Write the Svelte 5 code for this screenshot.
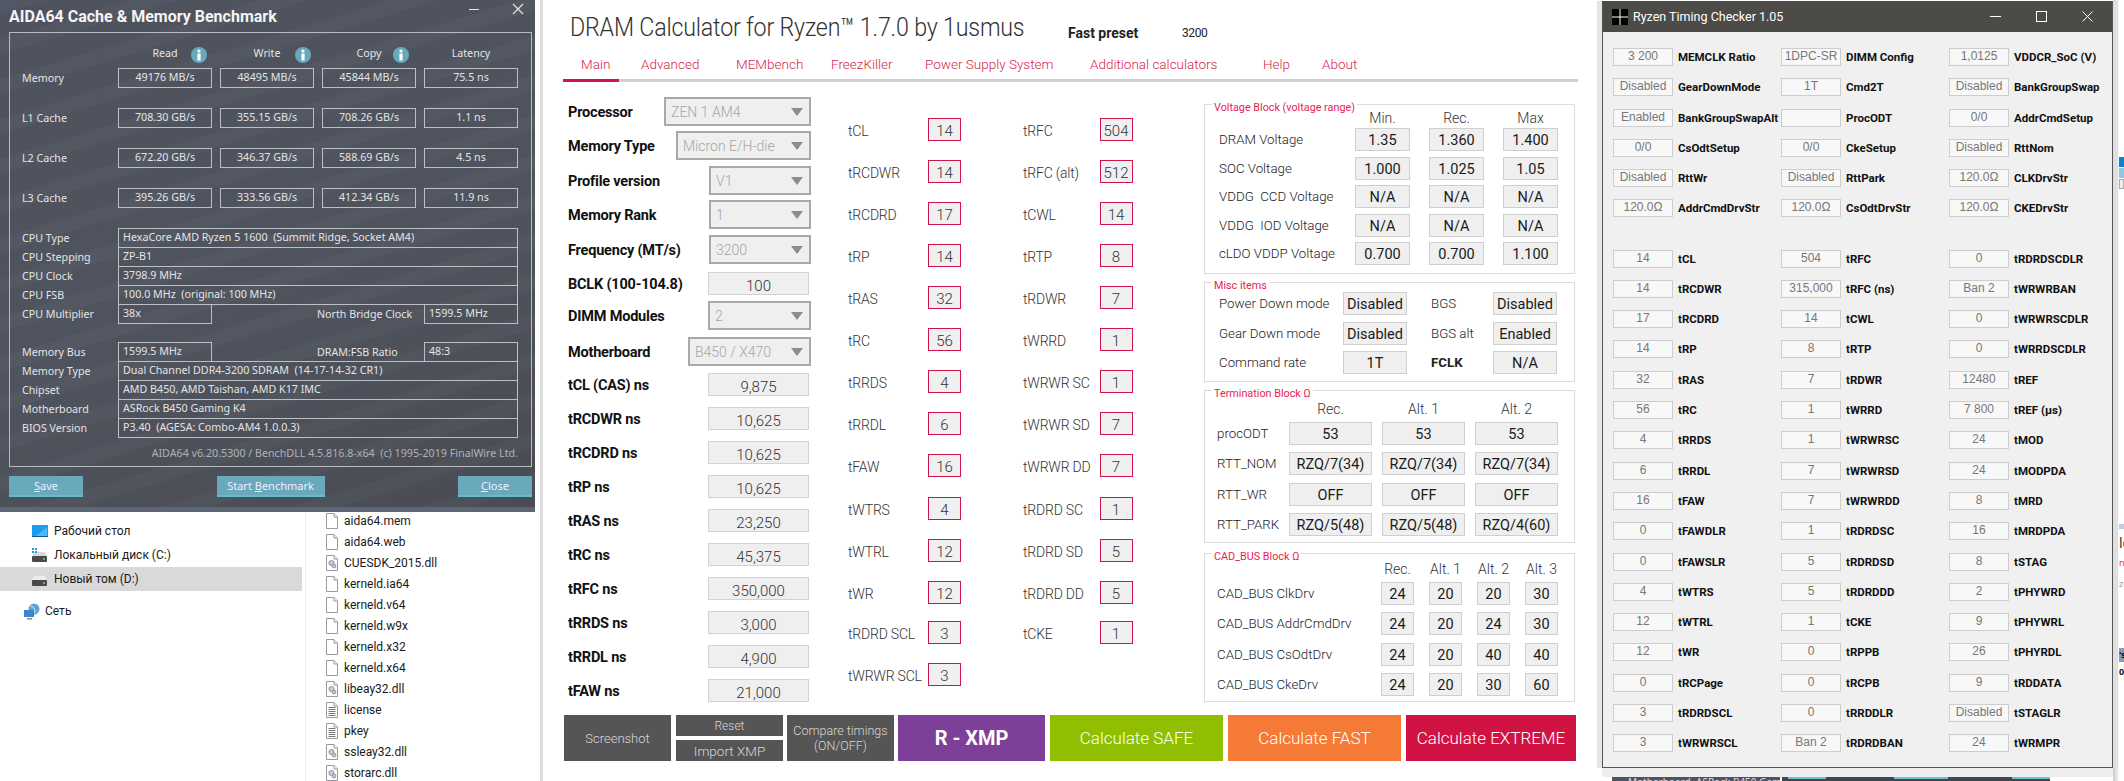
<script>
  const perf = [
    ['Memory', '49176 MB/s', '48495 MB/s', '45844 MB/s', '75.5 ns'],
    ['L1 Cache', '708.30 GB/s', '355.15 GB/s', '708.26 GB/s', '1.1 ns'],
    ['L2 Cache', '672.20 GB/s', '346.37 GB/s', '588.69 GB/s', '4.5 ns'],
    ['L3 Cache', '395.26 GB/s', '333.56 GB/s', '412.34 GB/s', '11.9 ns']
  ];
  const info1 = [
    ['CPU Type', 'HexaCore AMD Ryzen 5 1600  (Summit Ridge, Socket AM4)'],
    ['CPU Stepping', 'ZP-B1'],
    ['CPU Clock', '3798.9 MHz'],
    ['CPU FSB', '100.0 MHz  (original: 100 MHz)'],
    ['CPU Multiplier', '38x', 'North Bridge Clock', '1599.5 MHz']
  ];
  const info2 = [
    ['Memory Bus', '1599.5 MHz', 'DRAM:FSB Ratio', '48:3'],
    ['Memory Type', 'Dual Channel DDR4-3200 SDRAM  (14-17-14-32 CR1)'],
    ['Chipset', 'AMD B450, AMD Taishan, AMD K17 IMC'],
    ['Motherboard', 'ASRock B450 Gaming K4'],
    ['BIOS Version', 'P3.40  (AGESA: Combo-AM4 1.0.0.3)']
  ];
  const files = [
    ['aida64.mem', 'doc'], ['aida64.web', 'doc'], ['CUESDK_2015.dll', 'dll'], ['kerneld.ia64', 'doc'],
    ['kerneld.v64', 'doc'], ['kerneld.w9x', 'doc'], ['kerneld.x32', 'doc'], ['kerneld.x64', 'doc'],
    ['libeay32.dll', 'dll'], ['license', 'txt'], ['pkey', 'txt'], ['ssleay32.dll', 'dll'], ['storarc.dll', 'dll']
  ];
  const tabs = [['Main', 60], ['Advanced', 95], ['MEMbench', 95], ['FreezKiller', 94], ['Power Supply System', 165], ['Additional calculators', 173], ['Help', 59], ['About', 40]];
  const form = [
    { l: 'Processor', v: 'ZEN 1 AM4', w: 147, g: 15, s: 1 },
    { l: 'Memory Type', v: 'Micron E/H-die', w: 135, g: 5, s: 1 },
    { l: 'Profile version', v: 'V1', w: 102, g: 6, s: 1 },
    { l: 'Memory Rank', v: '1', w: 102, g: 5, s: 1 },
    { l: 'Frequency (MT/s)', v: '3200', w: 102, g: 6, s: 1 },
    { l: 'BCLK (100-104.8)', v: '100', g: 8 },
    { l: 'DIMM Modules', v: '2', w: 103, g: 6, s: 1 },
    { l: 'Motherboard', v: 'B450 / X470', w: 123, g: 7, s: 1 },
    { l: 'tCL (CAS) ns', v: '9,875', g: 7 },
    { l: 'tRCDWR ns', v: '10,625', g: 11 },
    { l: 'tRCDRD ns', v: '10,625', g: 11 },
    { l: 'tRP ns', v: '10,625', g: 11 },
    { l: 'tRAS ns', v: '23,250', g: 11 },
    { l: 'tRC ns', v: '45,375', g: 11 },
    { l: 'tRFC ns', v: '350,000', g: 11 },
    { l: 'tRRDS ns', v: '3,000', g: 11 },
    { l: 'tRRDL ns', v: '4,900', g: 11 },
    { l: 'tFAW ns', v: '21,000', g: 11 }
  ];
  const t1 = [['tCL', 14, 36], ['tRCDWR', 14, 19], ['tRCDRD', 17, 19], ['tRP', 14, 19], ['tRAS', 32, 19], ['tRC', 56, 19], ['tRRDS', 4, 19], ['tRRDL', 6, 19], ['tFAW', 16, 19], ['tWTRS', 4, 20], ['tWTRL', 12, 19], ['tWR', 12, 19], ['tRDRD SCL', 3, 17], ['tWRWR SCL', 3, 19]];
  const t2 = [['tRFC', 504, 36], ['tRFC (alt)', 512, 19], ['tCWL', 14, 19], ['tRTP', 8, 19], ['tRDWR', 7, 19], ['tWRRD', 1, 19], ['tWRWR SC', 1, 19], ['tWRWR SD', 7, 19], ['tWRWR DD', 7, 19], ['tRDRD SC', 1, 20], ['tRDRD SD', 5, 19], ['tRDRD DD', 5, 19], ['tCKE', 1, 17]];
  const volt = [['DRAM Voltage', '1.35', '1.360', '1.400'], ['SOC Voltage', '1.000', '1.025', '1.05'], ['VDDG  CCD Voltage', 'N/A', 'N/A', 'N/A'], ['VDDG  IOD Voltage', 'N/A', 'N/A', 'N/A'], ['cLDO VDDP Voltage', '0.700', '0.700', '1.100']];
  const misc = [['Power Down mode', 'Disabled', 'BGS', 'Disabled'], ['Gear Down mode', 'Disabled', 'BGS alt', 'Enabled'], ['Command rate', '1T', 'FCLK', 'N/A']];
  const term = [['procODT', '53', '53', '53'], ['RTT_NOM', 'RZQ/7(34)', 'RZQ/7(34)', 'RZQ/7(34)'], ['RTT_WR', 'OFF', 'OFF', 'OFF'], ['RTT_PARK', 'RZQ/5(48)', 'RZQ/5(48)', 'RZQ/4(60)']];
  const cad = [['CAD_BUS ClkDrv', 24, 20, 20, 30], ['CAD_BUS AddrCmdDrv', 24, 20, 24, 30], ['CAD_BUS CsOdtDrv', 24, 20, 40, 40], ['CAD_BUS CkeDrv', 24, 20, 30, 60]];
  const rtcA = [
    ['3 200', 'MEMCLK Ratio'], ['1DPC-SR', 'DIMM Config'], ['1,0125', 'VDDCR_SoC (V)'],
    ['Disabled', 'GearDownMode'], ['1T', 'Cmd2T'], ['Disabled', 'BankGroupSwap'],
    ['Enabled', 'BankGroupSwapAlt'], ['', 'ProcODT'], ['0/0', 'AddrCmdSetup'],
    ['0/0', 'CsOdtSetup'], ['0/0', 'CkeSetup'], ['Disabled', 'RttNom'],
    ['Disabled', 'RttWr'], ['Disabled', 'RttPark'], ['120.0Ω', 'CLKDrvStr'],
    ['120.0Ω', 'AddrCmdDrvStr'], ['120.0Ω', 'CsOdtDrvStr'], ['120.0Ω', 'CKEDrvStr']
  ];
  const rtcB = [
    ['14', 'tCL'], ['504', 'tRFC'], ['0', 'tRDRDSCDLR'],
    ['14', 'tRCDWR'], ['315,000', 'tRFC (ns)'], ['Ban 2', 'tWRWRBAN'],
    ['17', 'tRCDRD'], ['14', 'tCWL'], ['0', 'tWRWRSCDLR'],
    ['14', 'tRP'], ['8', 'tRTP'], ['0', 'tWRRDSCDLR'],
    ['32', 'tRAS'], ['7', 'tRDWR'], ['12480', 'tREF'],
    ['56', 'tRC'], ['1', 'tWRRD'], ['7 800', 'tREF (µs)'],
    ['4', 'tRRDS'], ['1', 'tWRWRSC'], ['24', 'tMOD'],
    ['6', 'tRRDL'], ['7', 'tWRWRSD'], ['24', 'tMODPDA'],
    ['16', 'tFAW'], ['7', 'tWRWRDD'], ['8', 'tMRD'],
    ['0', 'tFAWDLR'], ['1', 'tRDRDSC'], ['16', 'tMRDPDA'],
    ['0', 'tFAWSLR'], ['5', 'tRDRDSD'], ['8', 'tSTAG'],
    ['4', 'tWTRS'], ['5', 'tRDRDDD'], ['2', 'tPHYWRD'],
    ['12', 'tWTRL'], ['1', 'tCKE'], ['9', 'tPHYWRL'],
    ['12', 'tWR'], ['0', 'tRPPB'], ['26', 'tPHYRDL'],
    ['0', 'tRCPage'], ['0', 'tRCPB'], ['9', 'tRDDATA'],
    ['3', 'tRDRDSCL'], ['0', 'tRRDDLR'], ['Disabled', 'tSTAGLR'],
    ['3', 'tWRWRSCL'], ['Ban 2', 'tRDRDBAN'], ['24', 'tWRMPR']
  ];
</script>

{#snippet infoIcon()}
  <svg class="iicon" width="16" height="16" viewBox="0 0 16 16"><circle cx="8" cy="8" r="8" fill="#69a9bc"/><circle cx="8" cy="4" r="1.6" fill="#fff"/><rect x="6.4" y="6.5" width="3.2" height="7" fill="#fff"/></svg>
{/snippet}

{#snippet infoRow(r)}
  <div class="irow">
    <span class="ilbl">{r[0]}</span>
    {#if r.length > 2}
      <span class="ival short">{r[1]}</span>
      <span class="imid">{r[2]}</span>
      <span class="ival short">{r[3]}</span>
    {:else}
      <span class="ival">{r[1]}</span>
    {/if}
  </div>
{/snippet}

{#snippet fileIcon(kind)}
  <svg width="12" height="16" viewBox="0 0 12 16"><path d="M.5.5h7.5l3.5 3.5v11.5h-11z" fill="#fff" stroke="#9a9a9a"/><path d="M8 .5v3.5h3.5" fill="#eee" stroke="#9a9a9a"/>
    {#if kind === 'txt'}<path d="M2.5 5.5h7M2.5 7.5h7M2.5 9.5h7M2.5 11.5h7M2.5 13.5h7" stroke="#777"/>{/if}
    {#if kind === 'dll'}<circle cx="5.5" cy="8" r="2.6" fill="#c4ccd6" stroke="#8c96a2"/><circle cx="8" cy="11" r="1.9" fill="#c4ccd6" stroke="#8c96a2"/>{/if}
  </svg>
{/snippet}

<div class="desk">
  <section class="explorer">
    <nav class="nav">
      <div class="navrow ind">
        <svg width="16" height="12" viewBox="0 0 16 12"><rect width="16" height="11" fill="#1c9cea"/><path d="M4 11 15 2v9z" fill="#4fb9f5"/><rect y="11" width="16" height="1" fill="#0c5f9c"/></svg>
        <span>Рабочий стол</span>
      </div>
      <div class="navrow ind">
        <svg width="16" height="14" viewBox="0 0 16 14"><rect y="8" width="15" height="6" rx="1" fill="#4a4a4a"/><path d="M2 4h11l2 4H0z" fill="#d9d9d9"/><rect x="0" y="0" width="2" height="2" fill="#1c9cea"/><rect x="3" y="0" width="2" height="2" fill="#1c9cea"/><rect x="0" y="3" width="2" height="2" fill="#1c9cea"/><rect x="3" y="3" width="2" height="2" fill="#1c9cea"/><rect x="11" y="10" width="2" height="2" fill="#4fc04f"/></svg>
        <span>Локальный диск (C:)</span>
      </div>
      <div class="navrow ind sel">
        <svg width="16" height="14" viewBox="0 0 16 14"><rect y="8" width="15" height="6" rx="1" fill="#4a4a4a"/><path d="M2 4h11l2 4H0z" fill="#ececec"/><rect x="11" y="10" width="2" height="2" fill="#4fc04f"/></svg>
        <span>Новый том (D:)</span>
      </div>
      <div class="navrow net">
        <svg width="17" height="17" viewBox="0 0 17 17"><circle cx="10" cy="6" r="5.5" fill="#5aa5dc"/><path d="M6 3c3 0 5 2 5 7" stroke="#d8ecf8" fill="none"/><rect x="0" y="7" width="10" height="7" fill="#3a86c8"/><rect x="3" y="15" width="5" height="1.5" fill="#8a8a8a"/></svg>
        <span>Сеть</span>
      </div>
    </nav>
    <div class="flist">
      {#each files as f}
        <div class="frow">{@render fileIcon(f[1])}<span>{f[0]}</span></div>
      {/each}
    </div>
  </section>

  <section class="aida">
    <header class="atitle">
      <span>AIDA64 Cache &amp; Memory Benchmark</span>
      <span class="actl">
        <svg width="12" height="12" viewBox="0 0 12 12"><path d="M1 6.5h10" stroke="#e8e8e8"/></svg>
        <svg width="12" height="12" viewBox="0 0 12 12"><path d="M1 1l10 10M11 1 1 11" stroke="#e8e8e8" stroke-width="1.1"/></svg>
      </span>
    </header>
    <div class="aframe">
      <div class="pgrid head">
        <span></span>
        <span class="hc">Read{@render infoIcon()}</span>
        <span class="hc">Write{@render infoIcon()}</span>
        <span class="hc">Copy{@render infoIcon()}</span>
        <span class="hc">Latency</span>
      </div>
      {#each perf as p}
        <div class="pgrid prow">
          <span class="plbl">{p[0]}</span>
          {#each p.slice(1) as v}<span class="pval">{v}</span>{/each}
        </div>
      {/each}
      <div class="info">
        {#each info1 as r}{@render infoRow(r)}{/each}
        <div class="ispace"></div>
        {#each info2 as r}{@render infoRow(r)}{/each}
      </div>
      <div class="ver">AIDA64 v6.20.5300 / BenchDLL 4.5.816.8-x64  (c) 1995-2019 FinalWire Ltd.</div>
    </div>
    <div class="abtns">
      <button class="abtn sm"><u>S</u>ave</button>
      <button class="abtn lg">Start <u>B</u>enchmark</button>
      <button class="abtn sm"><u>C</u>lose</button>
    </div>
    <div class="astrip"></div>
  </section>

  <section class="dram">
    <header class="dhead">
      <h1>DRAM Calculator for Ryzen™ 1.7.0 by 1usmus</h1>
      <b class="fast">Fast preset</b>
      <span class="fastv">3200</span>
    </header>
    <div class="tabs">
      {#each tabs as t}<span class="tab" style="width:{t[1]}px">{t[0]}</span>{/each}
    </div>
    <div class="tabline"><i></i></div>
    <div class="dbody">
      <div class="form">
        {#each form as r}
          <div class="frm" class:tall={r.s} style="margin-top:{r.g}px">
            <b>{r.l}</b>
            {#if r.s}
              <div class="select" style="width:{r.w}px">
                <span>{r.v}</span>
                <svg width="12" height="8" viewBox="0 0 12 8"><path d="M0 0h12L6 8z" fill="#8c8c8c"/></svg>
              </div>
            {:else}
              <div class="input">{r.v}</div>
            {/if}
          </div>
        {/each}
      </div>
      <div class="tcol">
        {#each t1 as t}<div class="trow" style="margin-top:{t[2]}px"><span>{t[0]}</span><i>{t[1]}</i></div>{/each}
      </div>
      <div class="tcol">
        {#each t2 as t}<div class="trow" style="margin-top:{t[2]}px"><span>{t[0]}</span><i>{t[1]}</i></div>{/each}
      </div>
      <div class="blocks">
        <div class="block bv">
          <em class="leg">Voltage Block (voltage range)</em>
          <div class="bgrid gv">
            <span></span><span class="hd">Min.</span><span class="hd">Rec.</span><span class="hd">Max</span>
            {#each volt as r}
              <span class="bl">{r[0]}</span><span class="bx">{r[1]}</span><span class="bx">{r[2]}</span><span class="bx">{r[3]}</span>
            {/each}
          </div>
        </div>
        <div class="block bm">
          <em class="leg">Misc items</em>
          <div class="bgrid gm">
            {#each misc as r}
              <span class="bl">{r[0]}</span><span class="bx">{r[1]}</span>
              <span class="bl ml" class:fclk={r[2] === 'FCLK'}>{r[2]}</span><span class="bx">{r[3]}</span>
            {/each}
          </div>
        </div>
        <div class="block bt">
          <em class="leg">Termination Block Ω</em>
          <div class="bgrid gt">
            <span></span><span class="hd">Rec.</span><span class="hd">Alt. 1</span><span class="hd">Alt. 2</span>
            {#each term as r}
              <span class="bl">{r[0]}</span><span class="bx">{r[1]}</span><span class="bx">{r[2]}</span><span class="bx">{r[3]}</span>
            {/each}
          </div>
        </div>
        <div class="block bc">
          <em class="leg">CAD_BUS Block Ω</em>
          <div class="bgrid gc">
            <span></span><span class="hd">Rec.</span><span class="hd">Alt. 1</span><span class="hd">Alt. 2</span><span class="hd">Alt. 3</span>
            {#each cad as r}
              <span class="bl">{r[0]}</span><span class="bx">{r[1]}</span><span class="bx">{r[2]}</span><span class="bx">{r[3]}</span><span class="bx">{r[4]}</span>
            {/each}
          </div>
        </div>
      </div>
    </div>
    <div class="actions">
      <button class="act gray w107">Screenshot</button>
      <div class="stack w107"><button class="act gray">Reset</button><button class="act gray">Import XMP</button></div>
      <button class="act gray w107 cmp">Compare timings<br>(ON/OFF)</button>
      <button class="act purple">R - XMP</button>
      <button class="act big green">Calculate SAFE</button>
      <button class="act big orange">Calculate FAST</button>
      <button class="act big crim">Calculate EXTREME</button>
    </div>
  </section>

  <div class="peek">
    <span class="pk1">Motherboard</span><span class="pk2">ASRock B450 Gaming K4</span>
    <div class="pkdark"><i></i><i></i><i></i></div>
  </div>

  <div class="edge">
    <i class="e1"></i><i class="e2"></i><i class="e3"></i><i class="e4"></i>
    <span class="t1">lc</span><span class="t2">no</span><span class="t3">ze</span>
    <i class="e5"></i><span class="t4">'s)</span><span class="t5">0)</span>
  </div>

  <section class="rtc">
    <header class="rtitle">
      <svg width="16" height="16" viewBox="0 0 16 16"><rect width="16" height="16" fill="#000"/><path d="M8 0v16M0 8h16" stroke="#fff"/></svg>
      <span class="rname">Ryzen Timing Checker 1.05</span>
      <span class="rctl">
        <svg width="11" height="11" viewBox="0 0 11 11"><path d="M0 5.5h11" stroke="#fff"/></svg>
        <svg width="11" height="11" viewBox="0 0 11 11"><rect x=".5" y=".5" width="10" height="10" fill="none" stroke="#fff"/></svg>
        <svg width="11" height="11" viewBox="0 0 11 11"><path d="M.5.5l10 10M10.5.5l-10 10" stroke="#fff"/></svg>
      </span>
    </header>
    <div class="rgrid ra">
      {#each rtcA as c}<span class="rv">{c[0]}</span><b class="rl">{c[1]}</b>{/each}
    </div>
    <div class="rgrid rb">
      {#each rtcB as c}<span class="rv">{c[0]}</span><b class="rl">{c[1]}</b>{/each}
    </div>
  </section>
</div>

<style>
  :global(body) { margin: 0; background: #fff; }
  button { font: inherit; border: 0; padding: 0; margin: 0; }
  .desk { position: relative; width: 2124px; height: 781px; overflow: hidden; background: #fff; font-family: "Noto Sans", sans-serif; }

  /* explorer */
  .explorer { position: absolute; left: 0; top: 505px; width: 540px; height: 276px; display: flex; font-family: Roboto, sans-serif; font-size: 12px; color: #1a1a1a; }
  .nav { width: 302px; padding-top: 14px; flex: none; }
  .navrow { height: 24px; display: flex; align-items: center; gap: 6px; }
  .ind { padding-left: 32px; }
  .sel { background: #d9d9d9; }
  .net { margin-top: 8px; padding-left: 24px; gap: 4px; }
  .flist { margin-left: 3px; border-left: 1px solid #f0f0f0; padding: 5px 0 0 20px; }
  .frow { height: 21px; display: flex; align-items: center; gap: 6px; }

  /* aida */
  .aida { position: absolute; left: 0; top: 0; width: 535px; height: 512px; color: #e4e4e6; font-size: 10.7px;
    background: repeating-linear-gradient(163deg, rgba(255,255,255,.018) 0 14px, rgba(0,0,0,.02) 14px 38px), linear-gradient(160deg, #505460, #51555f 55%, #4a4d55); }
  .atitle { height: 32px; display: flex; justify-content: space-between; align-items: center; padding: 0 11px 0 9px; box-sizing: border-box; font-family: Roboto, sans-serif; font-size: 16px; font-weight: 700; color: #f4f4f4; }
  .actl { display: flex; gap: 32px; align-self: flex-start; padding-top: 3px; }
  .aframe { margin: 0 3px 0 9px; height: 435px; box-sizing: border-box; border: 1px solid #b8bbc0; padding: 10px 0 0 12px; }
  .pgrid { display: grid; grid-template-columns: 88px 94px 94px 94px 94px; column-gap: 8px; }
  .head { height: 20px; margin-bottom: 5px; align-items: center; }
  .hc { position: relative; text-align: center; }
  .iicon { position: absolute; right: 5px; top: 1px; }
  .hc:nth-child(3) .iicon { right: 3px; }
  .hc:nth-child(4) .iicon { right: 7px; }
  .prow { height: 20px; margin-bottom: 20px; align-items: center; }
  .pval { height: 20px; box-sizing: border-box; border: 1px solid #bcbfc4; text-align: center; line-height: 17px; }
  .irow { display: flex; height: 20px; margin-bottom: -1px; align-items: center; }
  .ispace { height: 19px; }
  .ilbl { width: 96px; flex: none; }
  .ival { width: 400px; height: 20px; box-sizing: border-box; border: 1px solid #bcbfc4; padding-left: 4px; line-height: 17px; white-space: pre; }
  .ival.short { width: 94px; }
  .imid { width: 107px; margin-left: 105px; flex: none; }
  .ver { text-align: right; width: 496px; margin-top: 9px; color: #b0b2b7; white-space: pre; }
  .abtns { display: flex; justify-content: space-between; margin: 9px 3px 0 9px; }
  .abtn { height: 21px; box-sizing: border-box; background: #6aa8bb; border-bottom: 2px solid #5cc0cf; color: #eef; font-size: 11px; font-family: inherit; line-height: 18px; }
  .sm { width: 74px; }
  .lg { width: 108px; }
  .astrip { position: absolute; left: 0; right: 0; bottom: 0; height: 5px; background: #5c6675; }

  /* dram */
  .dram { position: absolute; left: 540px; top: 0; width: 1056px; height: 781px; box-sizing: border-box; background: #fff; border-left: 3px solid #dcdcdc; padding-left: 20px; font-family: Roboto, sans-serif; color: #222; }
  .dhead { height: 50px; display: flex; align-items: center; padding: 0 0 0 7px; }
  h1 { margin: 0; font-weight: 300; font-size: 25.5px; color: #333; width: 498px; flex: none; white-space: nowrap; padding-top: 4px; letter-spacing: -.2px; transform: scaleX(.91); transform-origin: left center; }
  .fast { font-size: 14px; width: 114px; flex: none; padding-top: 16px; }
  .fastv { font-size: 12px; padding-top: 16px; letter-spacing: -.4px; }
  .tabs { display: flex; height: 29px; box-sizing: border-box; padding-bottom: 2px; align-items: center; font-weight: 300; font-size: 13.5px; color: #d9234f; }
  .tab { flex: none; padding-left: 18px; box-sizing: border-box; white-space: nowrap; }
  .tabline { height: 3px; width: 1015px; background: #cfcfcf; }
  .tabline i { display: block; width: 56px; height: 3px; background: #d2144a; }
  .dbody { display: flex; height: 620px; }
  .form { width: 243px; margin-left: 5px; flex: none; }
  .frm { display: flex; justify-content: space-between; align-items: center; height: 23px; }
  .frm.tall { height: 29px; }
  .frm b { font-size: 14.5px; font-weight: 700; color: #111; white-space: nowrap; letter-spacing: -.2px; padding-top: 2px; }
  .select { height: 29px; box-sizing: border-box; border: 2px solid #a9a9a9; background: #efefef; display: flex; align-items: center; justify-content: space-between; padding: 0 6px 0 5px; color: #a6a6a6; font-size: 14px; font-weight: 300; white-space: nowrap; }
  .input { width: 101px; height: 23px; margin-right: 2px; box-sizing: border-box; border: 1px solid #d2d2d2; background: #efefef; text-align: center; font-size: 15px; color: #333; font-weight: 300; line-height: 26px; }
  .tcol { width: 175px; flex: none; }
  .tcol:nth-child(2) { margin-left: 37px; }
  .trow { display: flex; height: 23px; align-items: center; font-weight: 300; font-size: 14px; color: #333; }
  .trow span { width: 80px; flex: none; white-space: nowrap; padding-top: 3px; box-sizing: border-box; letter-spacing: -.2px; }
  .tcol:nth-child(3) .trow span { width: 76.5px; }
  .trow i { font-style: normal; width: 33px; height: 23px; box-sizing: border-box; border: 1px solid #d2144a; background: #f0f0f0; text-align: center; font-size: 15px; line-height: 25px; }
  .blocks { margin-left: 6px; width: 371px; padding-top: 22px; flex: none; display: flex; flex-direction: column; }
  .block { position: relative; box-sizing: border-box; border: 1px solid #dcdcdc; width: 371px; }
  .leg { position: absolute; left: 7px; top: -3px; background: #fff; padding: 0 2px; font-style: normal; font-size: 10.8px; line-height: 12px; color: #e8234f; white-space: nowrap; }
  .bv { height: 170px; padding: 4px 0 0 14px; }
  .bm { height: 100px; margin-top: 8px; padding: 9px 0 0 14px; }
  .bt { height: 153px; margin-top: 8px; padding: 9px 0 0 12px; }
  .bc { height: 149px; margin-top: 10px; padding: 6px 0 0 12px; }
  .bgrid { display: grid; align-items: center; }
  .gv { grid-template-columns: 117px 55px 55px 55px; column-gap: 19px; row-gap: 5.5px; }
  .gm { grid-template-columns: 105px 64px 48px 64px; column-gap: 19px; row-gap: 6.5px; }
  .ml { margin-left: 5px; }
  .gt { grid-template-columns: 62px 83px 83px 83px; column-gap: 10px; row-gap: 7.3px; }
  .gc { grid-template-columns: 149px 33px 33px 33px 33px; column-gap: 15px; row-gap: 7.4px; }
  .hd { text-align: center; font-size: 14px; font-weight: 300; color: #333; height: 18px; line-height: 18px; }
  .gv .hd { margin-bottom: -4.5px; }
  .gt .hd { margin-bottom: -3.3px; }
  .gc .hd { margin-bottom: -3.4px; }
  .bl { font-size: 13.3px; font-weight: 300; color: #222; white-space: pre; }
  .fclk { font-weight: 700; }
  .bx { height: 23px; box-sizing: border-box; border: 1px solid #cfcfcf; background: #efefef; text-align: center; font-size: 14.5px; line-height: 24px; color: #1a1a1a; white-space: nowrap; }

  .actions { display: flex; margin: 13px 0 0 1px; height: 46px; gap: 5px; }
  .act { color: #fff; height: 46px; font-family: Roboto, sans-serif; font-weight: 300; font-size: 17px; white-space: nowrap; }
  .gray { background: #555; color: #d8d8d8; font-size: 13px; }
  .w107 { width: 107px; flex: none; }
  .cmp { margin-left: -1px; margin-right: -1px; line-height: 15px; font-size: 12.5px; }
  .stack { display: flex; flex-direction: column; gap: 4px; }
  .stack .act { height: 21px; width: 107px; font-size: 12px; }
  .stack .act + .act { font-size: 13.5px; }
  .purple { background: #7d3f98; width: 147px; font-weight: 700; font-size: 20px; flex: none; }
  .big { flex: none; width: 173px; }
  .green { background: #8fbf00; }
  .orange { background: #f47a35; }
  .crim { background: #d01343; width: 170px; }

  /* behind */
  .peek { position: absolute; left: 1612px; top: 777px; width: 438px; height: 4px; background: #4e5360; display: flex; font-size: 10px; color: #dde; overflow: hidden; line-height: 4px; }
  .pk1 { position: relative; left: 16px; width: 60px; height: 10px; line-height: 10px; }
  .pk2 { position: relative; left: 24px; width: 80px; height: 10px; line-height: 10px; white-space: nowrap; }
  .pkdark { position: absolute; left: 168px; right: 0; top: 0; bottom: 0; background: #404552; border-left: 2px solid #fff; }
  .pkdark i { position: absolute; top: 0; height: 2px; background: #6ac4cf; }
  .pkdark i:nth-child(1) { left: 6px; width: 38px; }
  .pkdark i:nth-child(2) { left: 112px; width: 54px; }
  .pkdark i:nth-child(3) { left: 230px; width: 38px; }

  .edge { position: absolute; left: 2113px; top: 0; width: 11px; height: 781px; background: linear-gradient(90deg, #ccc, #eee 5px, #fff 6px); overflow: hidden; }
  .edge i, .edge span { position: absolute; left: 6px; }
  .e1 { top: 157px; width: 5px; height: 10px; background: #0a84d0; }
  .e2 { top: 168px; width: 5px; height: 10px; background: #8cc8e0; }
  .e3 { top: 179px; width: 5px; height: 10px; background: #eee; border: 1px solid #aaa; box-sizing: border-box; }
  .e4 { top: 524px; width: 5px; height: 5px; background: #c0cce0; }
  .e5 { top: 648px; width: 5px; height: 14px; background: #8c9cb4; }
  .t1 { top: 534px; font-size: 14px; line-height: 18px; color: #333; }
  .t2 { top: 557px; font-size: 9px; line-height: 12px; color: #d04060; }
  .t3 { top: 578px; font-size: 9px; line-height: 12px; color: #999; }
  .t4 { top: 649px; font-size: 9px; line-height: 12px; color: #111; font-weight: 700; }
  .t5 { top: 666px; font-size: 9px; line-height: 12px; color: #111; font-weight: 700; }

  /* rtc */
  .rtc { position: absolute; left: 1602px; top: 1px; width: 511px; height: 767px; box-sizing: border-box; background: #f0f0f0; border: 1px solid #555; border-top: 0; box-shadow: -5px 0 0 #e6e6e6, 5px 0 0 #e0e0e0, 0 9px 0 #eee; font-family: "Noto Sans", sans-serif; }
  .rtitle { height: 31px; background: #4d4b48; display: flex; align-items: center; padding-left: 9px; color: #fff; font-family: Roboto, sans-serif; font-size: 12.5px; }
  .rname { margin-left: 5px; }
  .rctl { margin-left: auto; display: flex; gap: 35px; padding-right: 19px; }
  .rgrid { display: grid; grid-template-columns: 60px 98px 60px 98px 60px 80px; column-gap: 5px; row-gap: 12.3px; margin-left: 10px; grid-auto-rows: 18px; }
  .ra { margin-top: 16px; }
  .rb { margin-top: 32.1px; }
  .rv { height: 18px; box-sizing: border-box; border: 1px solid #cdcdcd; background: #f8f8f8; text-align: center; font-family: "Liberation Sans", sans-serif; font-size: 12px; line-height: 15px; color: #777; }
  .rl { font-family: Roboto, sans-serif; font-size: 11.5px; font-weight: 700; line-height: 18px; color: #111; white-space: nowrap; }
</style>
